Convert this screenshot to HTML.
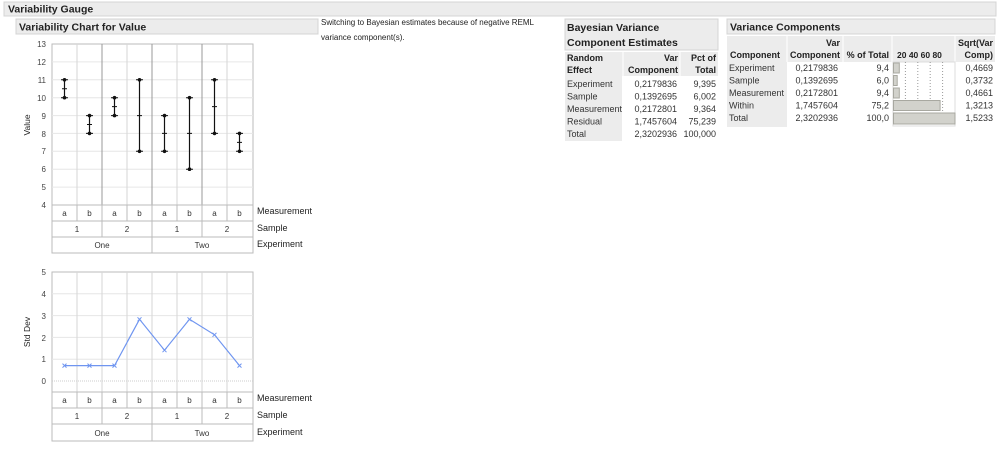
<!DOCTYPE html>
<html><head><meta charset="utf-8"><style>
html,body{margin:0;padding:0;background:#fff;width:999px;height:452px;overflow:hidden}
svg{display:block;font-family:"Liberation Sans",sans-serif}
.b{font-weight:bold}
</style></head><body>
<svg width="999" height="452" viewBox="0 0 999 452" font-size="9" fill="#222">
<rect x="4" y="2" width="992" height="14" fill="#ececec" stroke="#d4d4d4"/>
<text x="8" y="12.5" class="b" font-size="10.5">Variability Gauge</text>
<rect x="16" y="19" width="302" height="15" fill="#ececec" stroke="#d4d4d4"/>
<text x="19" y="30.5" class="b" font-size="10.5">Variability Chart for Value</text>
<text x="321" y="25" font-size="8">Switching to Bayesian estimates because of negative REML</text>
<text x="321" y="40" font-size="8">variance component(s).</text>

<g>
<rect x="52" y="44" width="201" height="161" fill="#fff" stroke="#bbb"/>
<g stroke="#e6e6e6">
<line x1="52" x2="253" y1="61.9" y2="61.9"/><line x1="52" x2="253" y1="79.8" y2="79.8"/><line x1="52" x2="253" y1="97.7" y2="97.7"/><line x1="52" x2="253" y1="115.6" y2="115.6"/><line x1="52" x2="253" y1="133.4" y2="133.4"/><line x1="52" x2="253" y1="151.3" y2="151.3"/><line x1="52" x2="253" y1="169.2" y2="169.2"/><line x1="52" x2="253" y1="187.1" y2="187.1"/>
</g>
<g stroke="#d6d6d6"><line x1="77" x2="77" y1="44" y2="205"/><line x1="127" x2="127" y1="44" y2="205"/><line x1="177" x2="177" y1="44" y2="205"/><line x1="227" x2="227" y1="44" y2="205"/></g>
<g stroke="#999"><line x1="102" x2="102" y1="44" y2="205"/><line x1="152" x2="152" y1="44" y2="205"/><line x1="202" x2="202" y1="44" y2="205"/></g>
<g font-size="8" text-anchor="end" fill="#444">
<text x="46" y="47">13</text><text x="46" y="65">12</text><text x="46" y="83">11</text><text x="46" y="101">10</text><text x="46" y="119">9</text><text x="46" y="137">8</text><text x="46" y="154">7</text><text x="46" y="172">6</text><text x="46" y="190">5</text><text x="46" y="208">4</text>
</g>
<text transform="translate(30,125) rotate(-90)" text-anchor="middle" font-size="8.5">Value</text>
<g stroke="#111" stroke-width="1.2">
<line x1="64.5" x2="64.5" y1="79.8" y2="97.7"/><line x1="89.5" x2="89.5" y1="115.6" y2="133.4"/><line x1="114.5" x2="114.5" y1="97.7" y2="115.6"/><line x1="139.5" x2="139.5" y1="79.8" y2="151.3"/><line x1="164.5" x2="164.5" y1="115.6" y2="151.3"/><line x1="189.5" x2="189.5" y1="97.7" y2="169.2"/><line x1="214.5" x2="214.5" y1="79.8" y2="133.4"/><line x1="239.5" x2="239.5" y1="133.4" y2="151.3"/>
</g>
<g stroke="#111" stroke-width="1">
<path d="M61 79.8h7M61 97.7h7M62 88.7h5M86 115.6h7M86 133.4h7M87 124.5h5M111 97.7h7M111 115.6h7M112 106.6h5M136 79.8h7M136 151.3h7M137 115.6h5M161 115.6h7M161 151.3h7M162 133.4h5M186 97.7h7M186 169.2h7M187 133.4h5M211 79.8h7M211 133.4h7M212 106.6h5M236 133.4h7M236 151.3h7M237 142.4h5"/>
</g>
<g fill="#111">
<circle cx="64.5" cy="79.8" r="1.8"/><circle cx="64.5" cy="97.7" r="1.8"/><circle cx="89.5" cy="115.6" r="1.8"/><circle cx="89.5" cy="133.4" r="1.8"/><circle cx="114.5" cy="97.7" r="1.8"/><circle cx="114.5" cy="115.6" r="1.8"/><circle cx="139.5" cy="79.8" r="1.8"/><circle cx="139.5" cy="151.3" r="1.8"/><circle cx="164.5" cy="115.6" r="1.8"/><circle cx="164.5" cy="151.3" r="1.8"/><circle cx="189.5" cy="97.7" r="1.8"/><circle cx="189.5" cy="169.2" r="1.8"/><circle cx="214.5" cy="79.8" r="1.8"/><circle cx="214.5" cy="133.4" r="1.8"/><circle cx="239.5" cy="133.4" r="1.8"/><circle cx="239.5" cy="151.3" r="1.8"/>
</g>
<g fill="none" stroke="#bbb">
<rect x="52" y="205" width="201" height="48"/>
<line x1="52" x2="253" y1="221" y2="221"/><line x1="52" x2="253" y1="237" y2="237"/>
<path d="M77 205v16M102 205v32M127 205v16M152 205v48M177 205v16M202 205v32M227 205v16"/>
</g>
<g font-size="8" text-anchor="middle" fill="#333">
<text x="64.5" y="216">a</text><text x="89.5" y="216">b</text><text x="114.5" y="216">a</text><text x="139.5" y="216">b</text><text x="164.5" y="216">a</text><text x="189.5" y="216">b</text><text x="214.5" y="216">a</text><text x="239.5" y="216">b</text>
<text x="77" y="232">1</text><text x="127" y="232">2</text><text x="177" y="232">1</text><text x="227" y="232">2</text>
<text x="102" y="248">One</text><text x="202" y="248">Two</text>
</g>
<g font-size="9"><text x="257" y="214">Measurement</text><text x="257" y="231">Sample</text><text x="257" y="247">Experiment</text></g>
</g>

<g>
<rect x="52" y="272" width="201" height="120" fill="#fff" stroke="#bbb"/>
<g stroke="#e6e6e6"><line x1="52" x2="253" y1="293.8" y2="293.8"/><line x1="52" x2="253" y1="315.6" y2="315.6"/><line x1="52" x2="253" y1="337.4" y2="337.4"/><line x1="52" x2="253" y1="359.2" y2="359.2"/></g>
<line x1="52" x2="253" y1="381" y2="381" stroke="#ccc" stroke-dasharray="1,1"/>
<g stroke="#d6d6d6"><path d="M77 272v120M102 272v120M127 272v120M152 272v120M177 272v120M202 272v120M227 272v120"/></g>
<g font-size="8" text-anchor="end" fill="#444">
<text x="46" y="275">5</text><text x="46" y="297">4</text><text x="46" y="319">3</text><text x="46" y="341">2</text><text x="46" y="362">1</text><text x="46" y="384">0</text>
</g>
<text transform="translate(30,332) rotate(-90)" text-anchor="middle" font-size="8.5">Std Dev</text>
<polyline fill="none" stroke="#6f95f0" stroke-width="1.2" points="64.5,365.6 89.5,365.6 114.5,365.6 139.5,319.3 164.5,350.2 189.5,319.3 214.5,334.8 239.5,365.6"/>
<g stroke="#6f95f0" stroke-width="1"><path d="M62.5 363.6l4 4M66.5 363.6l-4 4M87.5 363.6l4 4M91.5 363.6l-4 4M112.5 363.6l4 4M116.5 363.6l-4 4M137.5 317.3l4 4M141.5 317.3l-4 4M162.5 348.2l4 4M166.5 348.2l-4 4M187.5 317.3l4 4M191.5 317.3l-4 4M212.5 332.8l4 4M216.5 332.8l-4 4M237.5 363.6l4 4M241.5 363.6l-4 4"/></g>
<g fill="none" stroke="#bbb">
<rect x="52" y="392" width="201" height="49"/>
<line x1="52" x2="253" y1="408" y2="408"/><line x1="52" x2="253" y1="424" y2="424"/>
<path d="M77 392v16M102 392v32M127 392v16M152 392v49M177 392v16M202 392v32M227 392v16"/>
</g>
<g font-size="8" text-anchor="middle" fill="#333">
<text x="64.5" y="403">a</text><text x="89.5" y="403">b</text><text x="114.5" y="403">a</text><text x="139.5" y="403">b</text><text x="164.5" y="403">a</text><text x="189.5" y="403">b</text><text x="214.5" y="403">a</text><text x="239.5" y="403">b</text>
<text x="77" y="419">1</text><text x="127" y="419">2</text><text x="177" y="419">1</text><text x="227" y="419">2</text>
<text x="102" y="436">One</text><text x="202" y="436">Two</text>
</g>
<g font-size="9"><text x="257" y="401">Measurement</text><text x="257" y="418">Sample</text><text x="257" y="435">Experiment</text></g>
</g>

<rect x="565" y="19" width="153" height="31" fill="#ececec" stroke="#d4d4d4"/>
<text x="567" y="31" class="b" font-size="10.5">Bayesian Variance</text>
<text x="567" y="46" class="b" font-size="10.5">Component Estimates</text>
<rect x="565" y="52" width="153" height="24" fill="#ececec"/>
<rect x="565" y="76" width="57" height="65" fill="#ececec"/>
<line x1="623" x2="623" y1="52" y2="76" stroke="#fff"/><line x1="680" x2="680" y1="52" y2="76" stroke="#fff"/>
<g class="b" font-size="9"><text x="567" y="61">Random</text><text x="567" y="73">Effect</text>
<text x="678" y="61" text-anchor="end">Var</text><text x="678" y="73" text-anchor="end">Component</text>
<text x="716" y="61" text-anchor="end">Pct of</text><text x="716" y="73" text-anchor="end">Total</text></g>
<g font-size="9" fill="#333">
<text x="567" y="87">Experiment</text><text x="567" y="99.5">Sample</text><text x="567" y="112">Measurement</text><text x="567" y="124.5">Residual</text><text x="567" y="137">Total</text>
</g>
<g font-size="9" fill="#333" text-anchor="end">
<text x="677" y="87">0,2179836</text><text x="677" y="99.5">0,1392695</text><text x="677" y="112">0,2172801</text><text x="677" y="124.5">1,7457604</text><text x="677" y="137">2,3202936</text>
<text x="716" y="87">9,395</text><text x="716" y="99.5">6,002</text><text x="716" y="112">9,364</text><text x="716" y="124.5">75,239</text><text x="716" y="137">100,000</text>
</g>

<rect x="727" y="19" width="268" height="15" fill="#ececec" stroke="#d4d4d4"/>
<text x="730" y="30.5" class="b" font-size="10.5">Variance Components</text>
<rect x="727" y="36" width="268" height="26" fill="#ececec"/>
<rect x="727" y="62" width="60" height="65" fill="#ececec"/>
<g stroke="#fff"><line x1="787" x2="787" y1="36" y2="62"/><line x1="843" x2="843" y1="36" y2="62"/><line x1="892" x2="892" y1="36" y2="62"/><line x1="955" x2="955" y1="36" y2="62"/></g>
<g class="b" font-size="9">
<text x="730" y="58">Component</text>
<text x="840" y="46" text-anchor="end">Var</text><text x="840" y="58" text-anchor="end">Component</text>
<text x="889" y="58" text-anchor="end">% of Total</text>
<text x="897" y="58" font-size="8.5">20 40 60 80</text>
<text x="993" y="46" text-anchor="end">Sqrt(Var</text><text x="993" y="58" text-anchor="end">Comp)</text>
</g>
<g font-size="9" fill="#333">
<text x="729" y="71">Experiment</text><text x="729" y="83.5">Sample</text><text x="729" y="96">Measurement</text><text x="729" y="108.5">Within</text><text x="729" y="121">Total</text>
</g>
<g font-size="9" fill="#333" text-anchor="end">
<text x="838" y="71">0,2179836</text><text x="838" y="83.5">0,1392695</text><text x="838" y="96">0,2172801</text><text x="838" y="108.5">1,7457604</text><text x="838" y="121">2,3202936</text>
<text x="889" y="71">9,4</text><text x="889" y="83.5">6,0</text><text x="889" y="96">9,4</text><text x="889" y="108.5">75,2</text><text x="889" y="121">100,0</text>
<text x="993" y="71">0,4669</text><text x="993" y="83.5">0,3732</text><text x="993" y="96">0,4661</text><text x="993" y="108.5">1,3213</text><text x="993" y="121">1,5233</text>
</g>
<rect x="893" y="62" width="62" height="64" fill="#fff" stroke="#ddd"/>
<g stroke="#999" stroke-dasharray="1,2"><path d="M905.4 62v52M917.8 62v52M930.2 62v52M942.6 62v52"/></g>
<g fill="#d2d2cc" stroke="#a8a8a0">
<rect x="893.5" y="63" width="5.8" height="10"/><rect x="893.5" y="75.5" width="3.7" height="10"/><rect x="893.5" y="88" width="5.8" height="10"/><rect x="893.5" y="100.5" width="46.6" height="10"/><rect x="893.5" y="113" width="61.5" height="11"/>
</g>
</svg>
</body></html>
